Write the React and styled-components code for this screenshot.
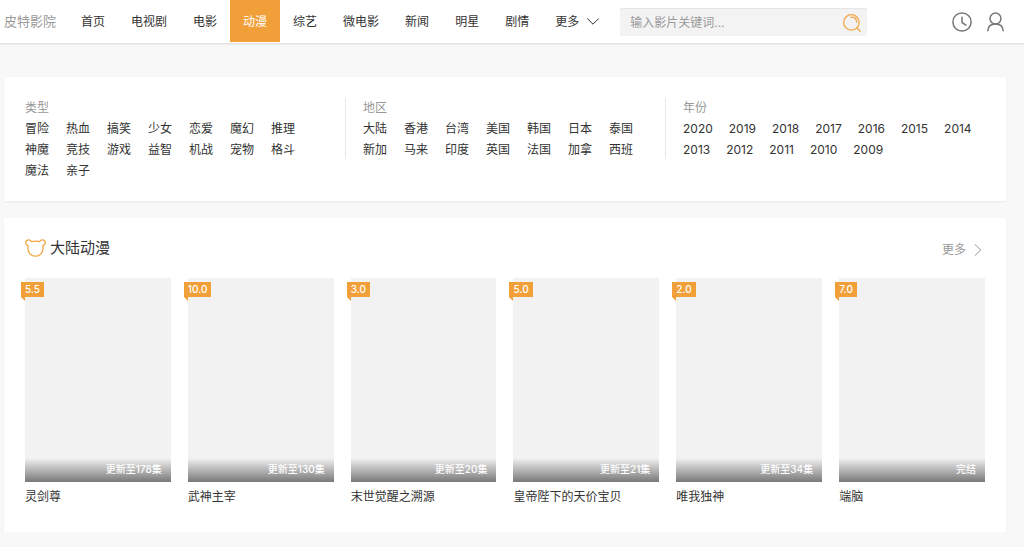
import React, { useState } from "react";
import styled, { createGlobalStyle } from "styled-components";

const GlobalStyle = createGlobalStyle`
  * {
    box-sizing: border-box;
  }

  body {
    margin: 0;
    background-color: #f8f8f8;
    color: #333;
    font-family: Inter, "Noto Sans CJK SC", sans-serif;
    font-size: 12px;
    line-height: 18px;
  }

  a {
    color: inherit;
    text-decoration: none;
  }

  ul {
    list-style: none;
    margin: 0;
    padding: 0;
  }

  h1, h2, h3, p {
    margin: 0;
    font-weight: normal;
  }

  button {
    padding: 0;
    border: none;
    background: none;
    color: inherit;
    font: inherit;
    cursor: pointer;
  }

  svg {
    display: block;
    fill: none;
    stroke: currentColor;
    stroke-linecap: round;
    stroke-linejoin: round;
  }
`;

const Header = styled.header`
  display: flex;
  align-items: center;
  padding: 0 20px 1px 4px;
  background-color: #fff;
  box-shadow: 0 1px 2px rgba(0, 0, 0, 0.12);
`;

const Logo = styled.a`
  margin-right: 12px;
  color: #999;
  font-size: 13px;
  white-space: nowrap;
`;

const Nav = styled.nav`
  ul {
    display: flex;
  }

  a,
  button {
    display: flex;
    align-items: center;
    gap: 8px;
    height: 42px;
    padding: 1px 13px 0;
    white-space: nowrap;
  }

  .active {
    background-color: #f19f38;
    color: #fff;
  }
`;

const Search = styled.form`
  display: flex;
  align-items: center;
  flex: 0 1 247px;
  height: 28px;
  margin: 1px 0 0 8px;
  padding: 2px 6px 0 10px;
  background-color: #f3f3f3;
  border-radius: 2px;
  box-shadow: inset 0 1px 1px rgba(0, 0, 0, 0.06);

  input {
    flex: 1;
    min-width: 0;
    padding: 0;
    border: none;
    outline: none;
    background: none;
    color: #333;
    font: inherit;

    &::placeholder {
      color: #999;
      opacity: 1;
    }
  }

  button {
    color: #f2a748;
  }
`;

const UserLinks = styled.div`
  display: flex;
  align-items: center;
  gap: 15px;
  margin-left: auto;
  padding-top: 2px;
  color: #777;
`;

const Main = styled.main`
  padding: 34px 18px 0 4px;
`;

const Panel = styled.section`
  margin-bottom: 17px;
  padding: 21px;
  background-color: #fff;
  box-shadow: 0 1px 2px rgba(0, 0, 0, 0.06);

  &:last-child {
    margin-bottom: 0;
  }
`;

const Filters = styled.div`
  display: grid;
  grid-template-columns: repeat(3, 1fr);
  align-items: start;
`;

const FilterGroup = styled.div`
  padding: 0 17px;
  border-left: 1px solid #e8e8e8;

  &:first-child {
    padding-left: 0;
    border-left: none;
  }

  &:last-child {
    padding-right: 0;
  }

  h3 {
    margin-bottom: 2px;
    color: #999;
    font-size: 12px;
    line-height: 20px;
  }

  ul {
    display: flex;
    flex-wrap: wrap;
    gap: 3px ${(props) => props.$gap}px;
  }
`;

const PanelHead = styled.div`
  display: flex;
  align-items: flex-start;
  justify-content: space-between;
  margin-bottom: 19px;

  h2 {
    display: flex;
    align-items: center;
    gap: 4px;
    font-size: 15px;
    line-height: 18px;
  }

  h2 svg {
    color: #f2a748;
  }
`;

const MoreLink = styled.a`
  display: flex;
  align-items: center;
  gap: 8px;
  padding: 2px 3px 0 0;
  color: #999;
`;

const VideoGrid = styled.ul`
  display: grid;
  grid-template-columns: repeat(6, 1fr);
  gap: 17px;
`;

const Poster = styled.a`
  position: relative;
  display: flex;
  align-items: flex-end;
  aspect-ratio: 5 / 7;
  background-color: #f2f2f2;
`;

const Score = styled.span`
  position: absolute;
  top: 4px;
  left: -4px;
  padding: 0 4px;
  background-color: #f19f38;
  color: #fff;
  font-size: 10px;
  font-weight: 500;
  line-height: 15px;

  &::after {
    content: "";
    position: absolute;
    top: 100%;
    left: 0;
    border-top: 4px solid #f19f38;
    border-left: 4px solid transparent;
  }
`;

const Status = styled.span`
  flex: 1;
  padding: 1px 9px 3px;
  background: linear-gradient(to bottom, rgba(0, 0, 0, 0), rgba(0, 0, 0, 0.5));
  color: #fff;
  font-size: 10px;
  font-weight: 500;
  line-height: 20px;
  text-align: right;
`;

const VideoName = styled.h3`
  margin: 6px 0 5px;
  font-size: 12px;
  overflow: hidden;
  text-overflow: ellipsis;
  white-space: nowrap;
`;

const navItems = [
  "首页",
  "电视剧",
  "电影",
  "动漫",
  "综艺",
  "微电影",
  "新闻",
  "明星",
  "剧情",
];

const filters = [
  {
    title: "类型",
    gap: 17,
    items: [
      "冒险", "热血", "搞笑", "少女", "恋爱", "魔幻", "推理", "神魔",
      "竞技", "游戏", "益智", "机战", "宠物", "格斗", "魔法", "亲子",
    ],
  },
  {
    title: "地区",
    gap: 17,
    items: [
      "大陆", "香港", "台湾", "美国", "韩国", "日本", "泰国",
      "新加", "马来", "印度", "英国", "法国", "加拿", "西班",
    ],
  },
  {
    title: "年份",
    gap: 16,
    items: [
      "2020", "2019", "2018", "2017", "2016", "2015",
      "2014", "2013", "2012", "2011", "2010", "2009",
    ],
  },
];

const videos = [
  { name: "灵剑尊", score: "5.5", status: "更新至178集" },
  { name: "武神主宰", score: "10.0", status: "更新至130集" },
  { name: "末世觉醒之溯源", score: "3.0", status: "更新至20集" },
  { name: "皇帝陛下的天价宝贝", score: "5.0", status: "更新至21集" },
  { name: "唯我独神", score: "2.0", status: "更新至34集" },
  { name: "端脑", score: "7.0", status: "完结" },
];

const ChevronDown = () => (
  <svg width="12" height="7" viewBox="0 0 12 7">
    <path d="M0.5 0.7 6 6.2 11.5 0.7" />
  </svg>
);

const ChevronRight = () => (
  <svg width="8" height="12" viewBox="0 0 8 12">
    <path d="M1 0.5 6.8 6 1 11.5" />
  </svg>
);

const SearchIcon = () => (
  <svg width="18" height="18" viewBox="0 0 18 18" strokeWidth="1.3">
    <circle cx="8.4" cy="8.4" r="7.7" />
    <path d="M7.8 3.200c3.200-.2 5.600 1.800 5.900 4.800M13.900 14l3.300 3.200" />
  </svg>
);

const ClockIcon = () => (
  <svg width="20" height="20" viewBox="0 0 20 20" strokeWidth="1.5">
    <circle cx="10" cy="10" r="9.1" />
    <path d="M10 5.2v5.3l4 2.6" />
  </svg>
);

const UserIcon = () => (
  <svg width="17" height="20" viewBox="0 0 17 20" strokeWidth="1.5">
    <circle cx="8.5" cy="6.6" r="5.5" />
    <path d="M0.8 18.8c.3-4.2 3.200-6.700 7.700-6.700s7.400 2.500 7.700 6.700" />
  </svg>
);

const BearIcon = () => (
  <svg width="21" height="18" viewBox="0 0 21 18" strokeWidth="1.3">
    <path d="M3.100 6.600C1.300 6 .5 4.300.8 3 1.200 1.200 2.600.700 3.900.800c1.300.1 2.300.8 2.700 1.900 2.400-.6 5.400-.6 7.800 0 .4-1.100 1.400-1.800 2.700-1.900 1.300-.1 2.700.4 3.100 2.200.3 1.300-.5 3-2.300 3.600.1.700.2 1.500.2 2.300 0 4.800-3.100 8.300-7.600 8.300S2.900 13.700 2.900 8.900c0-.8.100-1.600.2-2.300Z" />
  </svg>
);

const App = () => {
  const [active, setActive] = useState("动漫");
  const [keyword, setKeyword] = useState("");

  return (
    <>
      <GlobalStyle />
      <Header>
        <Logo href="#">皮特影院</Logo>
        <Nav>
          <ul>
            {navItems.map((item) => (
              <li key={item}>
                <a
                  href="#"
                  className={item === active ? "active" : ""}
                  onClick={() => setActive(item)}
                >
                  {item}
                </a>
              </li>
            ))}
            <li>
              <button type="button">
                更多
                <ChevronDown />
              </button>
            </li>
          </ul>
        </Nav>
        <Search onSubmit={(e) => e.preventDefault()}>
          <input
            type="text"
            aria-label="搜索"
            placeholder="输入影片关键词..."
            value={keyword}
            onChange={(e) => setKeyword(e.target.value)}
          />
          <button type="submit" aria-label="搜索">
            <SearchIcon />
          </button>
        </Search>
        <UserLinks>
          <a href="#" aria-label="播放记录">
            <ClockIcon />
          </a>
          <a href="#" aria-label="用户中心">
            <UserIcon />
          </a>
        </UserLinks>
      </Header>
      <Main>
        <Panel>
          <Filters>
            {filters.map(({ title, gap, items }) => (
              <FilterGroup key={title} $gap={gap}>
                <h3>{title}</h3>
                <ul>
                  {items.map((item) => (
                    <li key={item}>
                      <a href="#">{item}</a>
                    </li>
                  ))}
                </ul>
              </FilterGroup>
            ))}
          </Filters>
        </Panel>
        <Panel>
          <PanelHead>
            <h2>
              <BearIcon />
              大陆动漫
            </h2>
            <MoreLink href="#">
              更多
              <ChevronRight />
            </MoreLink>
          </PanelHead>
          <VideoGrid>
            {videos.map(({ name, score, status }) => (
              <li key={name}>
                <Poster href="#" aria-label={name}>
                  <Score>{score}</Score>
                  <Status>{status}</Status>
                </Poster>
                <VideoName>
                  <a href="#">{name}</a>
                </VideoName>
              </li>
            ))}
          </VideoGrid>
        </Panel>
      </Main>
    </>
  );
};

export default App;
